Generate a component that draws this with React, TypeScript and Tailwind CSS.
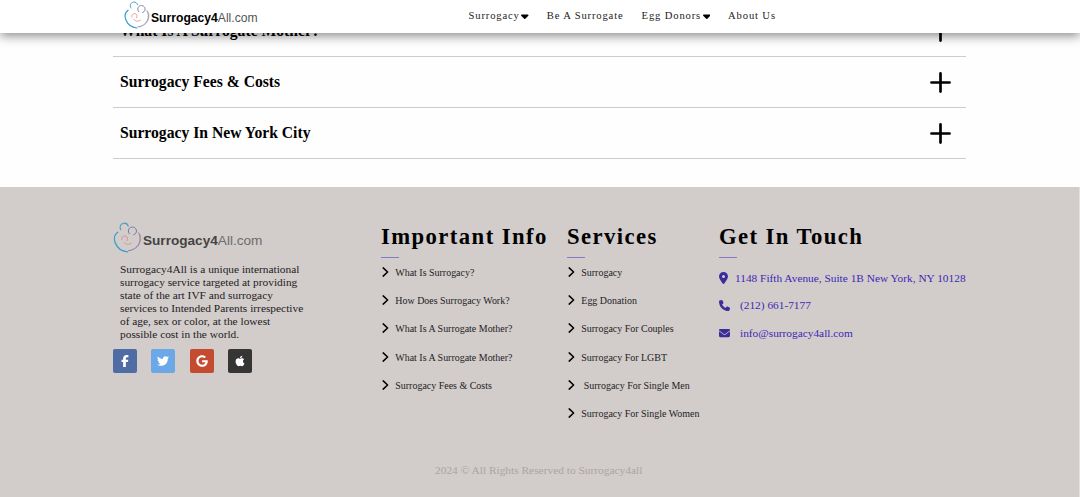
import React from "react";
import {
  FaApple,
  FaCaretDown,
  FaEnvelope,
  FaFacebookF,
  FaGoogle,
  FaLocationDot,
  FaPhone,
  FaTwitter,
} from "react-icons/fa6";

function LogoMark({ className }: { className: string }) {
  return (
    <svg viewBox="0 0 28 31" fill="none" strokeLinecap="round" className={className}>
      <path d="M7.300 7.800C5.500 5 7 1.600 10.200 1.200c2.300-.2 4 1 4.500 3" stroke="#4a9fc4" strokeWidth="1.100" />
      <path d="M16 11.800c-2.200-2.200-1.200-6 2-6.700 3.200-.6 5.600 2.200 4.800 5-.4 1.400-1.400 2.300-2.600 2.600" stroke="#77789f" strokeWidth="1" />
      <path d="M4.200 10.200C.8 12.500.2 17 1.800 21c2 4.900 6.200 8.200 12 8.900" stroke="#329fcb" strokeWidth="1.300" />
      <path d="M25.200 11c2.400 4.500 1.700 9.800-1.700 13.500-2.300 2.500-5 3.900-8.500 4.200" stroke="#84739b" strokeWidth=".9" />
      <path d="M26.600 12.500c1.600 5 .2 10-3.800 13.500" stroke="#a08ea8" strokeWidth=".6" />
      <path d="M8.500 17.800c-1-2.500 1.200-4.400 3.600-3.700 2 .6 2.600 2.800 1.300 4.600M10.600 20.500c1.800 2.400 5 2.400 7.200.6" stroke="#dc8796" strokeWidth=".9" />
    </svg>
  );
}

const navItems = [
  { label: "Surrogacy", menu: true },
  { label: "Be A Surrogate", menu: false },
  { label: "Egg Donors", menu: true },
  { label: "About Us", menu: false },
];

const questions = ["What Is A Surrogate Mother?", "Surrogacy Fees & Costs", "Surrogacy In New York City"];

const info = [
  "What Is Surrogacy?",
  "How Does Surrogacy Work?",
  "What Is A Surrogate Mother?",
  "What Is A Surrogate Mother?",
  "Surrogacy Fees & Costs",
];

const services = [
  "Surrogacy",
  "Egg Donation",
  "Surrogacy For Couples",
  "Surrogacy For LGBT",
  "\u00a0Surrogacy For Single Men",
  "Surrogacy For Single Women",
];

const socials = [
  { icon: FaFacebookF, color: "bg-[#4f6ca5]" },
  { icon: FaTwitter, color: "bg-[#6aa8e8]" },
  { icon: FaGoogle, color: "bg-[#c54b30]" },
  { icon: FaApple, color: "bg-[#353535]" },
];

function Heading({ children }: { children: React.ReactNode }) {
  return (
    <>
      <h2 className="whitespace-nowrap pt-px text-[22.700px] font-bold leading-[28px] tracking-[1.420px] text-black">{children}</h2>
      <div className="mt-[6px] h-px w-[18px] bg-[#8579cc]" />
    </>
  );
}

function LinkList({ items }: { items: string[] }) {
  return (
    <ul className="pt-[0.900px]">
      {items.map((item, i) => (
        <li key={i} className="flex h-[28.350px] items-center whitespace-nowrap text-[9.960px] text-[#222]">
          <svg viewBox="0 0 7 10" className="mb-[3px] ml-px mr-[6.300px] h-[10px] w-[7px] shrink-0" fill="none" stroke="#000" strokeWidth="1.500" strokeLinecap="round" strokeLinejoin="round">
            <path d="M1.200.9 5.600 5 1.200 9.100" />
          </svg>
          {item}
        </li>
      ))}
    </ul>
  );
}

export default function App() {
  return (
    <div className="flex h-[497px] w-[1080px] flex-col overflow-hidden bg-[#fefefe] font-['Liberation_Serif',serif]">
      <header className="relative z-10 flex h-[33px] shrink-0 bg-white pl-[124px] shadow-[0_3px_10px_rgba(0,0,0,0.45)]">
        <div className="flex w-[344.500px] pt-px">
          <LogoMark className="h-[28px] w-[26px]" />
          <div className="ml-px pt-[9px] font-['Liberation_Sans',sans-serif] text-[12.150px] leading-[16px] text-[#555]">
            <b className="text-black">Surrogacy4</b>All.com
          </div>
        </div>
        <nav className="flex h-8 items-center gap-[18px] whitespace-nowrap text-[10.600px] tracking-[0.860px] text-[#222]">
          {navItems.map((item) => (
            <a key={item.label} className="flex items-center">
              {item.label}
              {item.menu && <FaCaretDown className="ml-[1.500px] h-[12px] w-[7.500px] text-black" />}
            </a>
          ))}
        </nav>
      </header>

      <main className="-mt-[27px] ml-[113px] h-[181px] w-[853px] shrink-0">
        {questions.map((question) => (
          <div key={question} className="flex h-[51px] items-center justify-between border-b border-[#ccc] pl-[7px] pr-[15px] text-[15.660px] font-bold text-black">
            {question}
            <svg viewBox="0 0 22 22" className="size-[21px]" stroke="currentColor" strokeWidth="2.800" strokeLinecap="round">
              <path d="M11 1.500v19M1.500 11h19" />
            </svg>
          </div>
        ))}
      </main>

      <footer className="flex grow flex-col border-r border-[#e4e0e0] bg-[#d2cccb] pl-[113px]">
        <div className="flex h-[269px] pt-[35px]">
          <section className="w-[268px]">
            <div className="flex h-8">
              <LogoMark className="h-[31px] w-[29px]" />
              <div className="ml-px pt-[10px] font-['Liberation_Sans',sans-serif] text-[13.600px] leading-[18px] text-[#6c6c6c]">
                <b className="text-[#444]">Surrogacy4</b>All.com
              </div>
            </div>
            <p className="ml-[7px] mt-[9px] whitespace-nowrap text-[11.380px] leading-[13.100px] text-[#222]">
              Surrogacy4All is a unique international<br />
              surrogacy service targeted at providing<br />
              state of the art IVF and surrogacy<br />
              services to Intended Parents irrespective<br />
              of age, sex or color, at the lowest<br />
              possible cost in the world.
            </p>
            <div className="mt-[7px] flex gap-[14.300px]">
              {socials.map(({ icon: Icon, color }) => (
                <a key={color} className={`flex size-[24px] items-center justify-center rounded-[2px] text-white ${color}`}>
                  <Icon className="size-[12px]" />
                </a>
              ))}
            </div>
          </section>
          <section className="w-[186px]">
            <Heading>Important Info</Heading>
            <LinkList items={info} />
          </section>
          <section className="w-[152px]">
            <Heading>Services</Heading>
            <LinkList items={services} />
          </section>
          <section className="whitespace-nowrap text-[11.350px] text-[#3b28b4]">
            <Heading>Get In Touch</Heading>
            <div className="mt-[7px] flex h-[27.300px] items-center">
              <FaLocationDot className="mb-px mr-[7px] h-[12px] w-[9px] text-[#3c2e98]" />
              1148 Fifth Avenue, Suite 1B New York, NY 10128
            </div>
            <div className="flex h-[27.300px] items-center">
              <FaPhone className="mr-[10px] size-[11px] text-[#3c2e98]" />
              (212) 661-7177
            </div>
            <div className="flex h-[27.300px] items-center">
              <FaEnvelope className="mr-[10px] h-[12px] w-[11px] text-[#3c2e98]" />
              info@surrogacy4all.com
            </div>
          </section>
        </div>
        <p className="ml-[322px] mt-[7px] whitespace-nowrap text-[11.400px] leading-[14px] text-[#aaa5a5]">
          2024 © All Rights Reserved to Surrogacy4all
        </p>
      </footer>
    </div>
  );
}
